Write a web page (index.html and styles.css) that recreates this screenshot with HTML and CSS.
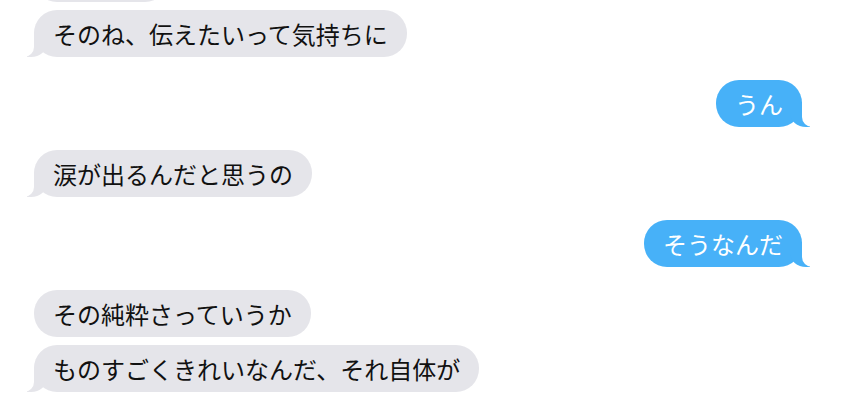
FILE: index.html
```html
<!DOCTYPE html>
<html lang="ja">
<head>
    <meta charset="UTF-8">
    <meta name="viewport" content="width=device-width, initial-scale=1.0">
    <title>メッセージ</title>
    <link rel="stylesheet" href="styles.css">
</head>
<body>

<div class="thread">
    <div class="group them">
        <p class="bubble">そうだね</p>
        <p class="bubble tail">そのね、伝えたいって気持ちに</p>
    </div>

    <div class="group me">
        <p class="bubble tail">うん</p>
    </div>

    <div class="group them">
        <p class="bubble tail">涙が出るんだと思うの</p>
    </div>

    <div class="group me">
        <p class="bubble tail">そうなんだ</p>
    </div>

    <div class="group them">
        <p class="bubble">その純粋さっていうか</p>
        <p class="bubble tail">ものすごくきれいなんだ、それ自体が</p>
    </div>
</div>

</body>
</html>
```

FILE: styles.css
```css
body {
    font-family: 'Noto Sans CJK JP', 'Noto Sans', sans-serif;
    background-color: #ffffff;
    margin: 0;
    padding: 0;
    overflow: hidden;
}

.thread {
    display: flex;
    flex-direction: column;
    gap: 23px;
    margin-top: -45px;
    padding: 0 62px 0 34px;
}

.group {
    display: flex;
    flex-direction: column;
    gap: 8px;
}

.group.them {
    align-items: flex-start;
}

.group.me {
    align-items: flex-end;
}

.bubble {
    position: relative;
    margin: 0;
    padding: 10px 19px;
    font-size: 24px;
    line-height: 27px;
    border-radius: 23px;
    white-space: nowrap;
}

.them .bubble {
    background-color: #e5e5ea;
    color: #111111;
}

.me .bubble {
    background-color: #47b1f8;
    color: #ffffff;
}

/* little tail on the last bubble of a group */
.bubble.tail::before,
.bubble.tail::after {
    content: "";
    position: absolute;
    bottom: 0;
    height: 25px;
}

.them .bubble.tail::before {
    left: -7px;
    width: 20px;
    background-color: #e5e5ea;
    border-bottom-right-radius: 16px 14px;
}

.them .bubble.tail::after {
    left: -26px;
    width: 26px;
    background-color: #ffffff;
    border-bottom-right-radius: 10px;
}

.me .bubble.tail::before {
    right: -8px;
    width: 20px;
    background-color: #47b1f8;
    border-bottom-left-radius: 16px 14px;
}

.me .bubble.tail::after {
    right: -26px;
    width: 26px;
    background-color: #ffffff;
    border-bottom-left-radius: 10px;
}
```
